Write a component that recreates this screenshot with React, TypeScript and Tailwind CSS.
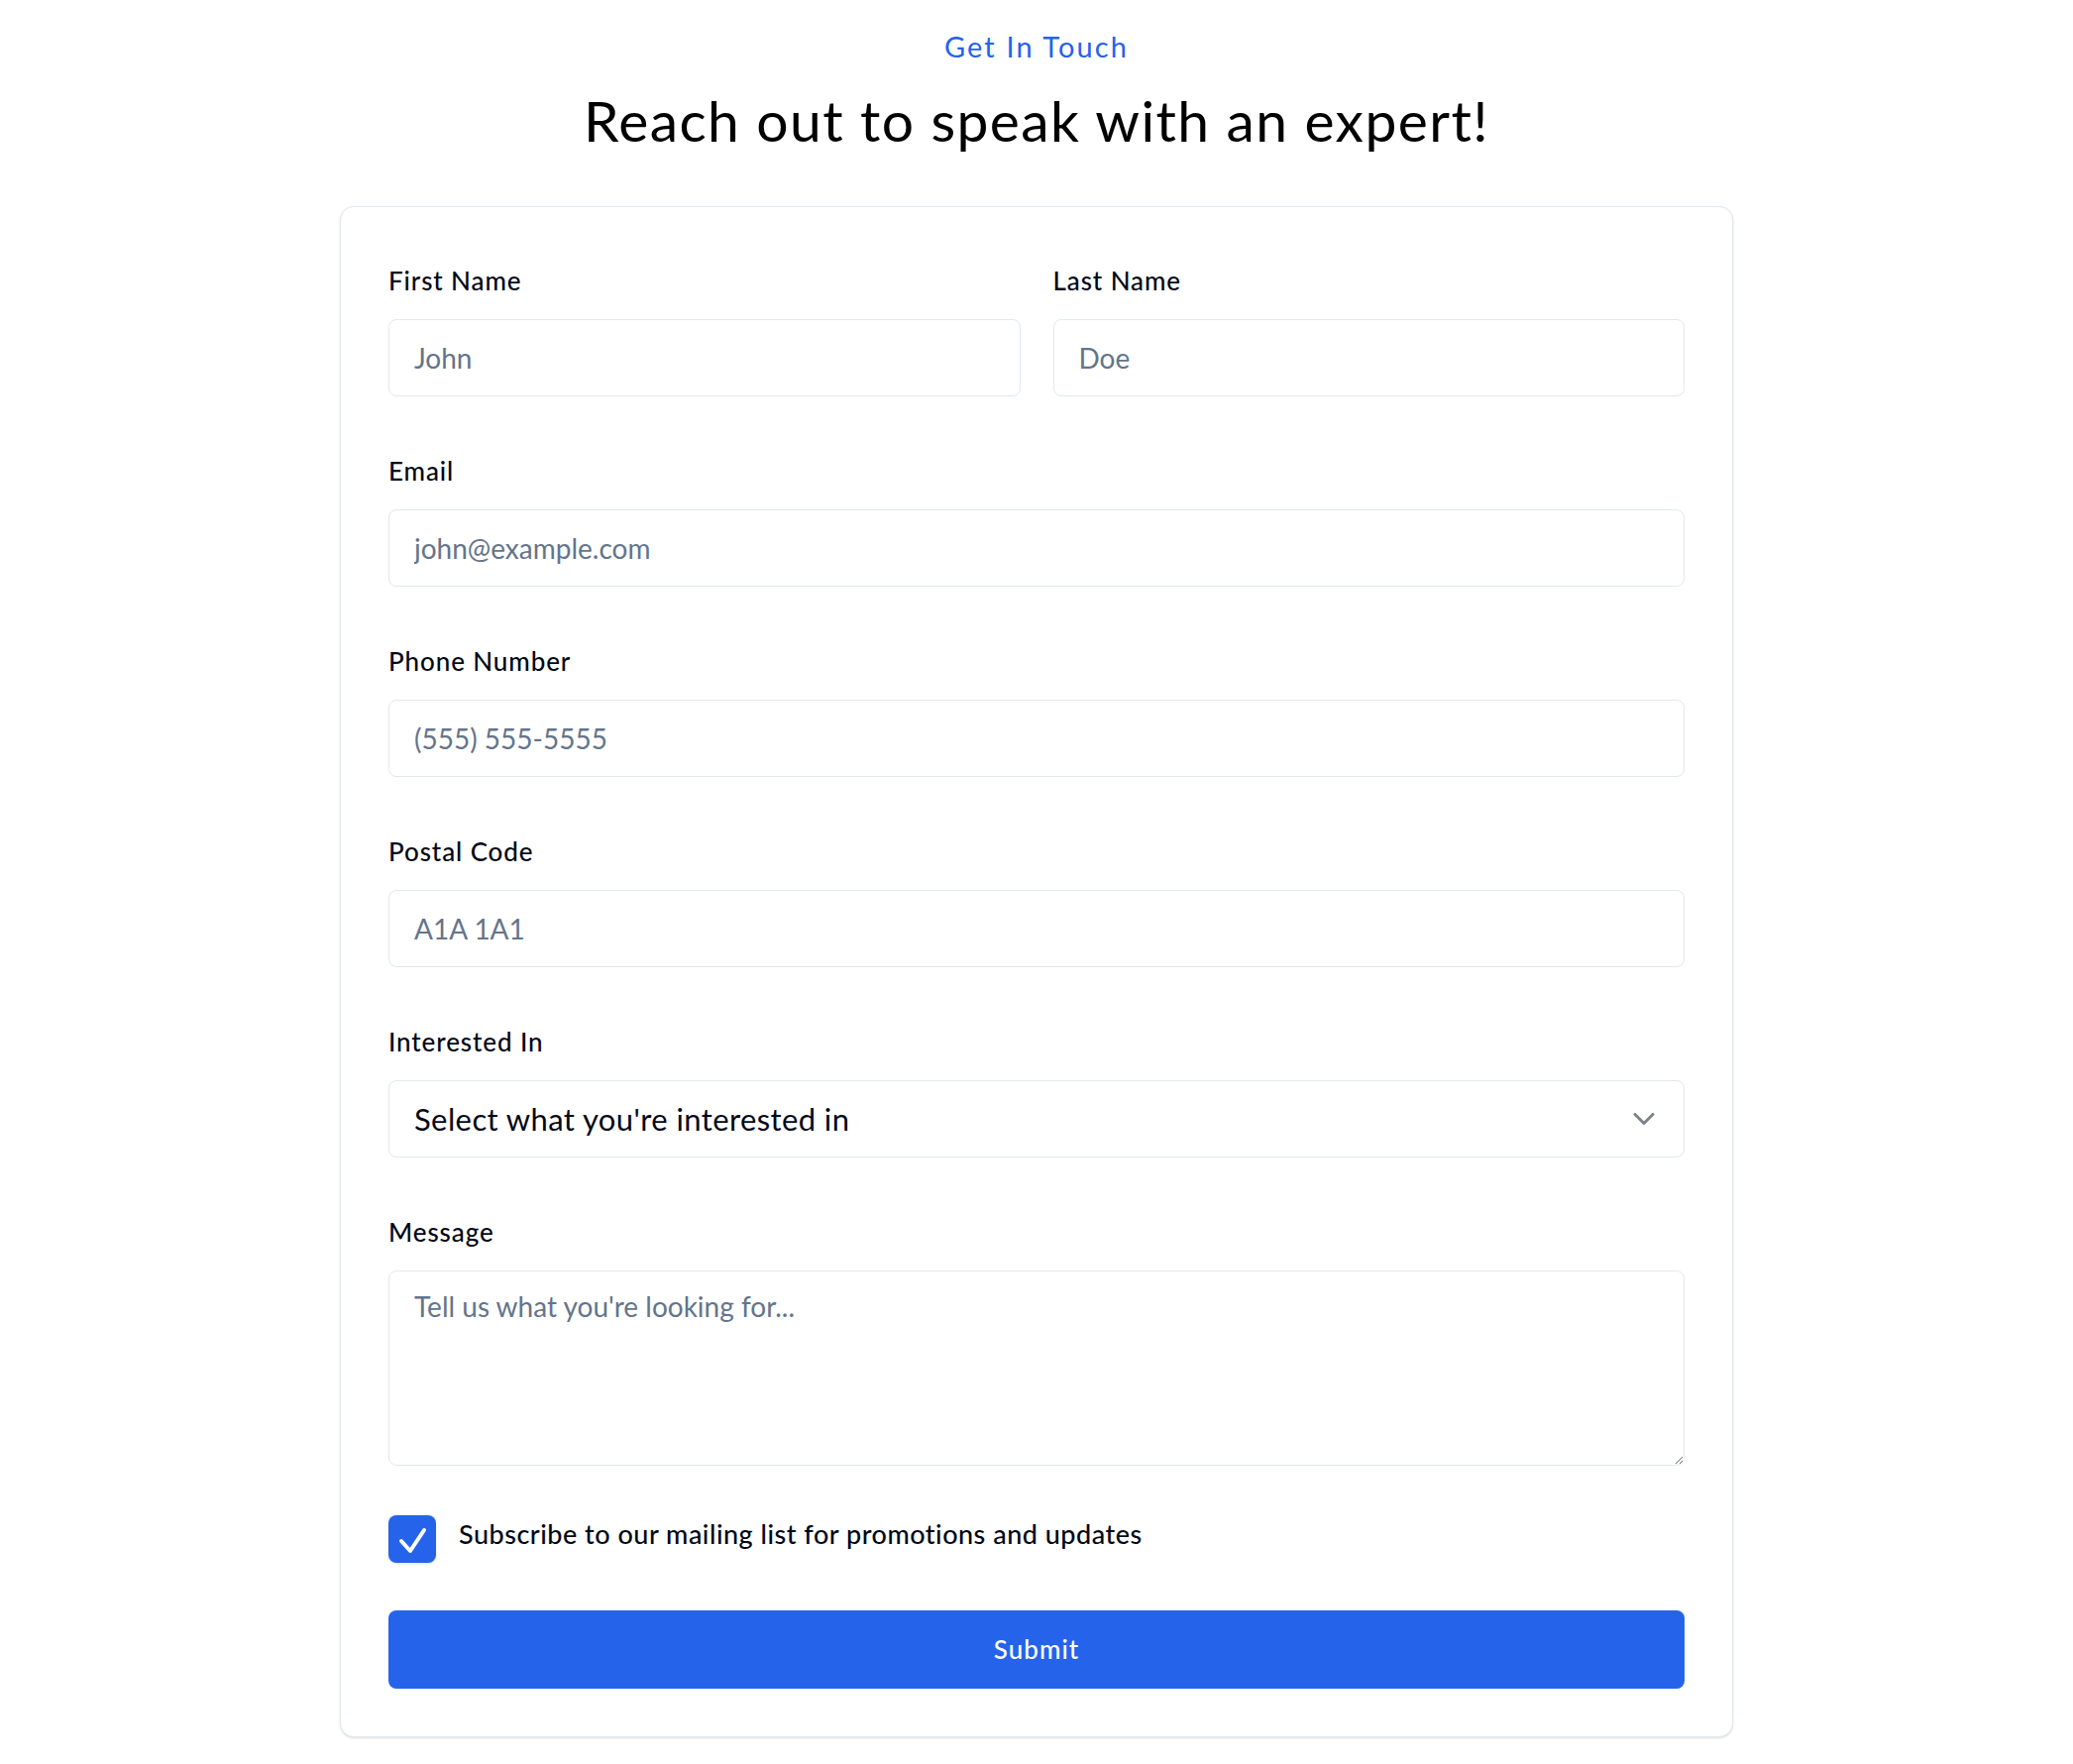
import React from "react";

function Field({ label, placeholder }: { label: string; placeholder: string }) {
  return (
    <div className="flex flex-col">
      <label className="text-[26px] leading-none tracking-[0.9px] font-medium text-[#020817]">{label}</label>
      <input
        className="mt-[26px] h-[78px] w-full rounded-[8px] border border-[#e2e8f0] bg-white px-[25px] text-[28px] text-[#020817] placeholder:text-[#64748b] outline-none"
        placeholder={placeholder}
      />
    </div>
  );
}

export default function App() {
  return (
    <div
      className="min-h-screen bg-white flex flex-col items-center"
      style={{ fontFamily: "Lato, 'Noto Sans', sans-serif" }}
    >
      <p className="mt-[32px] text-[29px] leading-none tracking-[2.1px] text-[#2563eb]">Get In Touch</p>
      <h1 className="mt-[32px] text-[57px] leading-none tracking-[1.4px] font-normal text-black">
        Reach out to speak with an expert!
      </h1>
      <form className="mt-[58px] w-[1406px] rounded-[14px] border border-[#e2e8f0] bg-white shadow-sm px-[48px] pt-[61px] pb-[48px]">
        <div className="flex flex-col gap-[62px]">
          <div className="grid grid-cols-2 gap-[33px]">
            <Field label="First Name" placeholder="John" />
            <Field label="Last Name" placeholder="Doe" />
          </div>
          <Field label="Email" placeholder="john@example.com" />
          <Field label="Phone Number" placeholder="(555) 555-5555" />
          <Field label="Postal Code" placeholder="A1A 1A1" />
          <div className="flex flex-col">
            <label className="text-[26px] leading-none tracking-[0.9px] font-medium text-[#020817]">Interested In</label>
            <button
              type="button"
              className="mt-[26px] h-[78px] w-full rounded-[8px] border border-[#e2e8f0] bg-white pl-[25px] pr-[22px] flex items-center justify-between text-[31px] tracking-[0.4px] text-[#020817]"
            >
              <span>Select what you're interested in</span>
              <svg width="36" height="36" viewBox="0 0 24 24" fill="none" stroke="currentColor" strokeWidth="2" strokeLinecap="round" strokeLinejoin="round" className="opacity-50">
                <path d="m6 9 6 6 6-6" />
              </svg>
            </button>
          </div>
          <div className="flex flex-col">
            <label className="text-[26px] leading-none tracking-[0.9px] font-medium text-[#020817]">Message</label>
            <textarea
              className="mt-[26px] h-[197px] w-full rounded-[8px] border border-[#e2e8f0] bg-white px-[25px] pt-[14px] text-[28px] leading-[1.5] text-[#020817] placeholder:text-[#64748b] outline-none"
              placeholder="Tell us what you're looking for..."
            />
          </div>
        </div>
        <div className="mt-[50px] flex items-start gap-[23px]">
          <div className="w-[48px] h-[48px] shrink-0 rounded-[8px] bg-[#2563eb] shadow-sm flex items-center justify-center">
            <svg width="48" height="48" viewBox="0 0 48 48" fill="none" stroke="white" strokeWidth="4" strokeLinecap="round" strokeLinejoin="round">
              <path d="M13 26 L22 36 L36 15" />
            </svg>
          </div>
          <span className="mt-[5px] text-[27px] leading-none tracking-[0.5px] font-medium text-[#020817]">
            Subscribe to our mailing list for promotions and updates
          </span>
        </div>
        <button
          type="button"
          className="mt-[48px] h-[79px] w-full rounded-[8px] bg-[#2563eb] text-white text-[26px] tracking-[1px] font-medium"
        >
          Submit
        </button>
      </form>
    </div>
  );
}
